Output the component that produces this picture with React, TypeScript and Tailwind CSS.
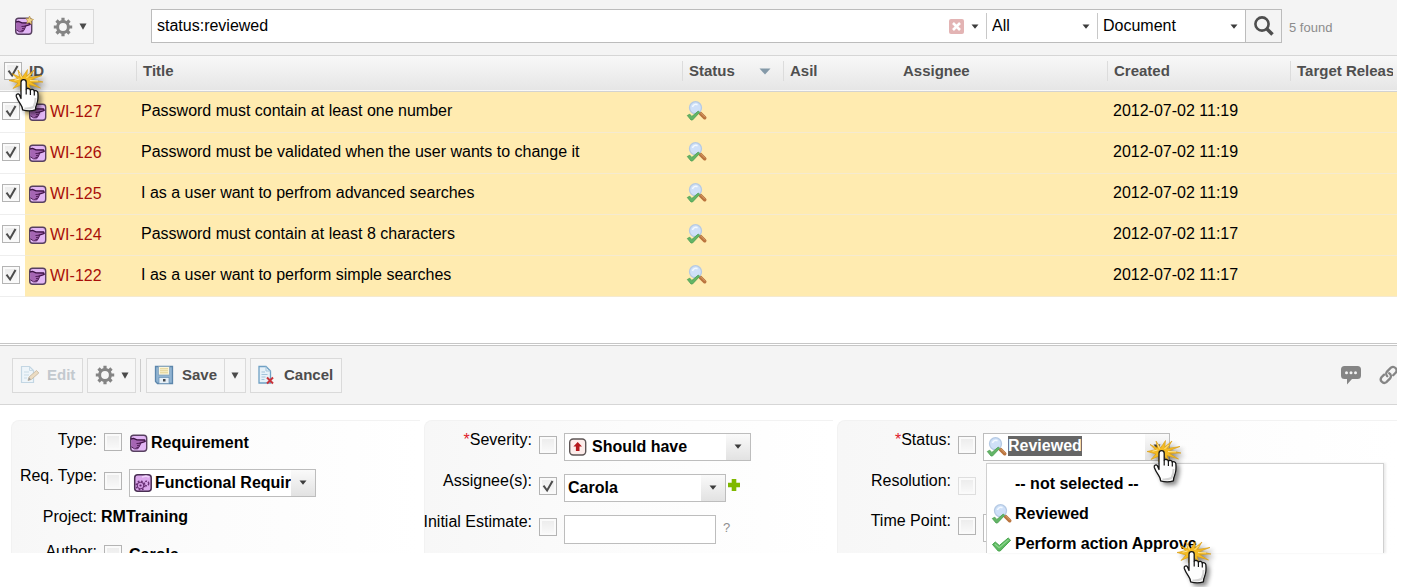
import React from "react";

type Item = { id: string; title: string; created: string };

const items: Item[] = [
  { id: "WI-127", title: "Password must contain at least one number", created: "2012-07-02 11:19" },
  { id: "WI-126", title: "Password must be validated when the user wants to change it", created: "2012-07-02 11:19" },
  { id: "WI-125", title: "I as a user want to perfrom advanced searches", created: "2012-07-02 11:19" },
  { id: "WI-124", title: "Password must contain at least 8 characters", created: "2012-07-02 11:17" },
  { id: "WI-122", title: "I as a user want to perform simple searches", created: "2012-07-02 11:17" },
];

/* ---------- icons ---------- */

function RequirementIcon({ star = false }: { star?: boolean }) {
  return (
    <svg width="20" height="20" viewBox="0 0 20 20" className="shrink-0" aria-hidden="true">
      <rect x="1.700" y="2.200" width="16" height="16" rx="3" fill="#e2b6f5" stroke="#574060" strokeWidth="1.400" />
      <path d="M2.300 6.300l2.200-.8L8 6.800l7.800.3.300 1.800-5.100 1.300-.3 2.600-1.300 2.700-3.400.3-3.700-2.300z" fill="#a565b3" />
      <path d="M2 6l2.500-.6L8 6.800l7.700.2.500 1.500-5.600 1.800" fill="none" stroke="#3c1244" strokeWidth="1.300" strokeLinejoin="round" />
      <path d="M7.500 10.500l4-.3-.4 2-3 .3M10.800 12.400l-.8 1.800-2.500.3M9.700 14.500l-1 1.300H5.500l-3.200-2" fill="none" stroke="#4d1c56" strokeWidth="1" strokeLinejoin="round" />
      {star && (
        <path d="M15.500 0l1.200 2.700L19.500 3.500l-2.300 1.700.3 3-2.300-1.700-2.500 1 .8-2.700L11.800 2.500l2.700.1z" fill="#efd48a" stroke="#b08a3c" strokeWidth=".6" />
      )}
    </svg>
  );
}

function FunctionalIcon() {
  return (
    <svg width="20" height="20" viewBox="0 0 20 20" className="shrink-0" aria-hidden="true">
      <rect x="1.700" y="1.700" width="16.500" height="16.500" rx="3" fill="#dba8ec" stroke="#4a3054" strokeWidth="1.500" />
      <circle cx="7.500" cy="12.500" r="3.200" fill="#cf98df" stroke="#6b3277" strokeWidth="1.100" />
      <circle cx="7.500" cy="12.500" r="4.300" fill="none" stroke="#6b3277" strokeWidth="1.500" strokeDasharray="1.700 1.680" />
      <circle cx="7.500" cy="12.500" r="1.100" fill="#5c2268" />
      <circle cx="13.500" cy="10.500" r="2.200" fill="none" stroke="#6b3277" strokeWidth="1.500" strokeDasharray="1.700 1" />
      <path d="M9 4l4-1 3 1" stroke="#f0d4fa" strokeWidth="1.400" fill="none" />
    </svg>
  );
}

function ReviewedIcon() {
  return (
    <svg width="22" height="22" viewBox="0 0 22 22" className="shrink-0" aria-hidden="true">
      <path d="M14.200 13.200l4.500 4.500" stroke="#b9733d" strokeWidth="3.600" strokeLinecap="round" />
      <path d="M14.500 12.800l4.500 4.500" stroke="#dba06c" strokeWidth="1" />
      <circle cx="9.500" cy="7.700" r="6" fill="#cfe0f8" stroke="#b5cae4" strokeWidth="1.300" />
      <path d="M6.500 7a3.500 3.500 0 0 1 5-2.300" stroke="#f3f9ff" strokeWidth="1.600" fill="none" />
      <path d="M1.300 15.500l2.500-1.300 2 2.300 6.500-5.500 1.400 1.400-7.200 7.600H5z" fill="#63b566" stroke="#4b9d52" strokeWidth=".8" />
    </svg>
  );
}

function ApproveIcon() {
  return (
    <svg width="22" height="22" viewBox="0 0 22 22" className="shrink-0" aria-hidden="true">
      <path d="M1.500 11.500L4.300 9l4 3.500L17.200 5l2.400 2.300L9.200 18H7.200z" fill="#5cb860" stroke="#4aa54f" strokeWidth="1" strokeLinejoin="round" />
      <path d="M3.800 11l4.300 3.800 9.400-8" stroke="#8ad68b" strokeWidth="1.200" fill="none" />
    </svg>
  );
}

function SeverityIcon() {
  return (
    <svg width="20" height="20" viewBox="0 0 20 20" className="shrink-0" aria-hidden="true">
      <rect x="1.700" y="2" width="16" height="16" rx="3.500" fill="#fdecea" stroke="#5d5555" strokeWidth="1.400" />
      <path d="M9.700 5l4.300 4.500h-2.500V14H7.900V9.500H5.400z" fill="#b5161b" />
    </svg>
  );
}

function GearIcon() {
  return (
    <svg width="20" height="20" viewBox="0 0 20 20" className="shrink-0" aria-hidden="true">
      <g stroke="#848484" strokeWidth="3.200">
        <path d="M10 .8v3.500M10 15.700v3.500M.8 10h3.500M15.700 10h3.500M3.500 3.500l2.500 2.500M14 14l2.500 2.500M3.500 16.500L6 14M14 6l2.500-2.500" />
        <circle cx="10" cy="10" r="5.400" fill="none" strokeWidth="3" />
      </g>
    </svg>
  );
}

function Triangle() {
  return (
    <svg width="8" height="7" viewBox="0 0 8 7" className="shrink-0" aria-hidden="true">
      <path d="M.5.500h7L4 6.700z" fill="#4a4a4a" />
    </svg>
  );
}

function SmallCaret() {
  return (
    <svg width="8" height="5" viewBox="0 0 8 5" className="shrink-0" aria-hidden="true">
      <path d="M.5.500h7L4 4.700z" fill="#3c3c3c" />
    </svg>
  );
}

function EditIcon() {
  return (
    <svg width="20" height="20" viewBox="0 0 20 20" className="shrink-0" aria-hidden="true">
      <path d="M1.500 1.500h8l4 4v12h-12z" fill="#eef5fa" stroke="#c3d6e3" strokeWidth="1.200" />
      <path d="M9.500 1.500v4h4M4 7h5M4 10h5M4 13h3" stroke="#c9dbe6" fill="none" />
      <path d="M8 15.500l1-3.500 7.500-6.500 2.300 2.500-7.500 6.500z" fill="#ecdcc2" stroke="#c8bba5" strokeWidth=".9" />
      <path d="M8 15.500l1-3.200 2 2.200z" fill="#9e9e9e" />
    </svg>
  );
}

function SaveIcon() {
  return (
    <svg width="20" height="20" viewBox="0 0 20 20" className="shrink-0" aria-hidden="true">
      <path d="M1.500 1.500h17v17h-15l-2-2z" fill="#8fb3d2" stroke="#5c86ab" strokeWidth="1.300" />
      <rect x="4.500" y="1.500" width="11" height="8.500" fill="#fbf6dc" stroke="#7d9dba" strokeWidth=".7" />
      <path d="M6 3.800h8M6 5.800h8M6 7.800h8" stroke="#e0cf8a" />
      <rect x="5" y="12.500" width="10" height="6" fill="#e6eff6" stroke="#6a92b5" strokeWidth=".7" />
      <rect x="9" y="14" width="2.500" height="2.500" fill="#44484c" />
    </svg>
  );
}

function CancelIcon() {
  return (
    <svg width="20" height="20" viewBox="0 0 20 20" className="shrink-0" aria-hidden="true">
      <path d="M3 1.500h7l4.500 4.500v12H3z" fill="#e6f1f8" stroke="#6fa0c4" strokeWidth="1.300" />
      <path d="M10 1.500V6h4.500M5.500 7H9M5.500 9.500h6M5.500 12h4M5.500 14.500h3" stroke="#a3c3da" fill="none" />
      <path d="M11 12.500l6 6M17 12.500l-6 6" stroke="#c9333a" strokeWidth="2" />
    </svg>
  );
}

function ClearIcon() {
  return (
    <svg width="15" height="15" viewBox="0 0 15 15" aria-hidden="true">
      <rect width="15" height="15" rx="2" fill="#e3b4b4" />
      <path d="M4 4l7 7M11 4l-7 7" stroke="#fff" strokeWidth="2.600" />
    </svg>
  );
}

function SearchIcon() {
  return (
    <svg width="22" height="22" viewBox="0 0 22 22" aria-hidden="true">
      <circle cx="9" cy="9" r="6.600" fill="none" stroke="#4e4e4e" strokeWidth="2.600" />
      <path d="M13.500 13.500l6 6" stroke="#4e4e4e" strokeWidth="3.600" />
    </svg>
  );
}

function CommentIcon() {
  return (
    <svg width="20" height="20" viewBox="0 0 20 20" aria-hidden="true">
      <path d="M3.500 1h13a3.500 3.500 0 0 1 3.500 3.500v6a3.500 3.500 0 0 1-3.500 3.500H11l-5 5.500V14H3.500A3.500 3.500 0 0 1 0 10.500v-6A3.500 3.500 0 0 1 3.500 1z" fill="#858585" />
      <circle cx="5.500" cy="7.700" r="1.500" fill="#f4f4f4" />
      <circle cx="10" cy="7.700" r="1.500" fill="#f4f4f4" />
      <circle cx="14.500" cy="7.700" r="1.500" fill="#f4f4f4" />
    </svg>
  );
}

function LinkIcon() {
  return (
    <svg width="20" height="20" viewBox="0 0 20 20" aria-hidden="true">
      <g fill="none" stroke="#858585" strokeWidth="2.300" strokeLinecap="round">
        <path d="M8.200 11.200a3.400 3.400 0 0 1 0-4.800l3.700-3.700a3.500 3.500 0 0 1 4.900 4.900l-2.600 2.600" />
        <path d="M10.200 8.200a3.400 3.400 0 0 1 .9 5.200l-3.700 3.700a3.500 3.500 0 0 1-4.900-4.900l2.600-2.600" />
      </g>
    </svg>
  );
}

function PlusIcon() {
  return (
    <svg width="14" height="14" viewBox="0 0 14 14" aria-hidden="true">
      <path d="M4.700 1h4.600v3.700H13v4.600H9.300V13H4.700V9.300H1V4.700h3.700z" fill="#7fb800" />
    </svg>
  );
}

function ClickHand() {
  return (
    <svg width="44" height="50" viewBox="0 0 44 50" className="drop-shadow-[3px_3px_2px_rgba(0,0,0,0.45)]" aria-hidden="true">
      <path
        d="M14.500 12L19.500 4.500 18.800 11 26 5l-4.500 7.500L34 10.500 23.500 14.500 35 17l-11.500.5 9 5.500-11.500-3.500 1.500 5-5-4.500-5 5.500.5-5.500-8 3.500 5-5.500L1 15.500l8.500-1.800L4 8.500l7.500 3.500L10 5z"
        fill="#f3bb24"
        stroke="#d99a0c"
        strokeWidth=".6"
      />
      <path d="M11.500 14l-5 1.200M13.500 12.500L11.500 8M18.500 13l4-4M22 15.500l8 .3" stroke="#ffe9a3" strokeWidth=".9" />
      <path
        d="M13 33.500V17.300a2.600 2.600 0 0 1 5.200 0v7.200c.6-1.500 3.700-1.400 4.200.6.900-1.200 3.500-.8 3.900 1 1-.8 3.400-.4 3.600 1.800.3 4 .2 7.600-1 10.600-1.100 2.700-1.400 4.200-1.500 6.300-3.800 1.300-8.800 1.200-12.800 0 0-3-1-4.200-2.600-6.500-1.600-2.200-2.800-4.400-3.700-6.800-.7-2.300 2-3.500 3.200-1.600z"
        fill="#fdfdfd"
        stroke="#141414"
        strokeWidth="1.300"
        strokeLinejoin="round"
      />
      <path d="M18.200 24.500v5M22.400 25v5M26.300 26v4.500" stroke="#141414" strokeWidth="1.200" />
      <path d="M27.500 33c.2 3-.5 6-2 9-3 1.500-6 1.800-9 1.500" stroke="#d4d4d4" strokeWidth="2" fill="none" />
    </svg>
  );
}

/* ---------- controls ---------- */

function Tick({ label, checked = false, disabled = false }: { label: string; checked?: boolean; disabled?: boolean }) {
  return (
    <span className="grid size-[18px] shrink-0">
      <input
        type="checkbox"
        aria-label={label}
        defaultChecked={checked}
        disabled={disabled}
        className="peer col-start-1 row-start-1 size-[18px] appearance-none border border-[#b4b4b4] bg-linear-to-b from-[#ebebeb] to-[#fafafa] shadow-[inset_0_0_0_2px_#fafafa] disabled:border-[#dedede]"
      />
      <svg viewBox="0 0 18 18" className="pointer-events-none invisible col-start-1 row-start-1 size-[18px] peer-checked:visible" aria-hidden="true">
        <path d="M4.500 8.700l3.600 4.800L13.500 4" fill="none" stroke="#4c4c4c" strokeWidth="2" />
      </svg>
    </span>
  );
}

function FilterSelect({ label, value, className }: { label: string; value: string; className: string }) {
  return (
    <div className={`grid items-center border-l border-[#c8c8c8] ${className}`}>
      <select aria-label={label} className="col-start-1 row-start-1 w-full appearance-none bg-transparent pl-[5px] text-base leading-6 text-black outline-none">
        <option>{value}</option>
      </select>
      <span className="pointer-events-none col-start-1 row-start-1 mr-[7px] justify-self-end">
        <SmallCaret />
      </span>
    </div>
  );
}

function CaretBox() {
  return (
    <span className="pointer-events-none flex w-6 shrink-0 items-center justify-center self-stretch bg-linear-to-b from-[#fafafa] to-[#e2e2e2]">
      <SmallCaret />
    </span>
  );
}

function Combo({ id, value, icon, width }: { id: string; value: string; icon?: React.ReactNode; width: string }) {
  return (
    <div className={`flex h-7 items-center border border-[#bdbdbd] bg-white pl-[3px] ${width}`}>
      {icon}
      <select id={id} className="h-6 min-w-0 flex-1 appearance-none bg-white pb-0.5 font-bold text-black outline-none">
        <option>{value}</option>
      </select>
      <CaretBox />
    </div>
  );
}

type FieldProps = {
  label: string;
  htmlFor?: string;
  required?: boolean;
  compact?: boolean;
  tick?: "off" | "on" | "disabled" | "none";
  height?: string;
  children?: React.ReactNode;
};

function Field({ label, htmlFor, required, compact, tick = "off", height = "h-[41px]", children }: FieldProps) {
  return (
    <div className={`flex items-start ${height}`}>
      <div className="flex w-28 shrink-0 justify-end">
        <label htmlFor={htmlFor} className="leading-5 whitespace-nowrap">
          {required && <span className="text-[#e0202a]">*</span>}
          {label}
        </label>
      </div>
      {tick !== "none" && (
        <span className={`mr-[7px] ml-[7px] flex ${compact ? "mt-[3px]" : "mt-[6px]"}`}>
          <Tick label={`Change ${label}`} checked={tick === "on"} disabled={tick === "disabled"} />
        </span>
      )}
      {children}
    </div>
  );
}

const button = "flex h-[35px] items-center border border-[#dadada] bg-[#f6f6f6] text-[15px] font-bold text-[#4d4d4d]";
const panel = "min-w-0 rounded-tl-lg border-l border-t border-[#f2f2f2] bg-linear-to-r from-[#f7f7f7] via-[#fcfcfc] to-white pt-[9px]";
const th = "h-[34px] overflow-hidden p-0 pb-1 text-left align-middle whitespace-nowrap";
const thInner = "flex h-5 items-center border-l border-[#dcdcdc] pl-1.5";

export default function App() {
  return (
    <div className="mr-[18px] bg-white pb-[34px] font-['Liberation_Sans',Arial,sans-serif] text-base text-black">
      <header className="flex h-14 items-start border-b border-[#d6d6d6] bg-[#f4f4f4] pt-[9px]">
        <button type="button" aria-label="New requirement" className="ml-[14px] mt-[7px]">
          <RequirementIcon star />
        </button>
        <button type="button" aria-label="Settings" className={`${button} ml-[11px] w-[49px] justify-center gap-1.5`}>
          <GearIcon />
          <Triangle />
        </button>
        <div className="ml-[57px] flex h-[34px] min-w-0 flex-1 items-stretch border border-[#bcbcbc] bg-white">
          <input type="text" aria-label="Search query" defaultValue="status:reviewed" className="min-w-0 flex-1 pl-[5px] outline-none" />
          <button type="button" aria-label="Clear" className="mr-[7px]">
            <ClearIcon />
          </button>
          <button type="button" aria-label="Recent queries" className="mr-[7px]">
            <SmallCaret />
          </button>
          <FilterSelect label="Scope" value="All" className="my-[3px] w-[111px]" />
          <FilterSelect label="Kind" value="Document" className="my-[3px] w-[148px]" />
          <button type="button" aria-label="Search" className="flex w-9 items-center justify-center border-l border-[#bcbcbc] bg-[#f4f4f4]">
            <SearchIcon />
          </button>
        </div>
        <span className="ml-[7px] mt-[9px] w-[108px] text-[13px] leading-5 text-[#8c8c8c]">5 found</span>
      </header>

      <div className="relative">
        <table className="w-full table-fixed border-collapse">
          <colgroup>
            <col className="w-[25px]" />
            <col className="w-[111px]" />
            <col />
            <col className="w-[101px]" />
            <col className="w-[113px]" />
            <col className="w-[211px]" />
            <col className="w-[183px]" />
            <col className="w-[107px]" />
          </colgroup>
          <thead>
            <tr className="h-[35px] border-b border-[#d2d2d2] bg-linear-to-b from-[#f8f8f8] to-[#e6e6e6] text-[15px] text-[#4f4f4f]">
              <th className={`${th} pl-1`}>
                <Tick label="Select all" checked />
              </th>
              <th className={`${th} pl-1`}>ID</th>
              <th className={th}><div className={thInner}>Title</div></th>
              <th className={th}>
                <div className={thInner}>
                  Status
                  <svg width="12" height="7" viewBox="0 0 12 7" className="ml-auto mr-3" aria-hidden="true">
                    <path d="M.5.500h11L6 6.500z" fill="#8499a8" />
                  </svg>
                </div>
              </th>
              <th className={th}><div className={thInner}>Asil</div></th>
              <th className={th}><div className="pl-[7px]">Assignee</div></th>
              <th className={th}><div className={thInner}>Created</div></th>
              <th className={`${th} pr-1`}><div className={`${thInner} overflow-hidden`}>Target Release</div></th>
            </tr>
          </thead>
          <tbody>
            {items.map((item) => (
              <tr key={item.id} className="h-[41px] border-b border-[#f5ead0] bg-[#ffebb0]">
                <td className="border-b border-[#eeeeee] bg-white p-0 pb-0.5 pl-0.5">
                  <Tick label={`Select ${item.id}`} checked />
                </td>
                <td className="p-0 pl-[3px]">
                  <div className="flex items-center gap-0.5">
                    <RequirementIcon />
                    <a href={`#${item.id}`} className="text-[#a80f0a]">{item.id}</a>
                  </div>
                </td>
                <td className="truncate p-0 pb-0.5 pl-[5px]">{item.title}</td>
                <td className="p-0 pb-0.5 pl-1"><ReviewedIcon /></td>
                <td />
                <td />
                <td className="p-0 pb-0.5 pl-1.5">{item.created}</td>
                <td />
              </tr>
            ))}
          </tbody>
        </table>
        <div className="pointer-events-none absolute left-2 top-[9px]">
          <ClickHand />
        </div>
      </div>

      <section className="mt-[46px] border-t border-[#c6c6c6] pt-px">
        <div className="flex items-center overflow-hidden border-b border-t border-b-[#d6d6d6] border-t-[#c6c6c6] bg-[#f4f4f4] pt-3 pb-[11px] pl-3">
          <button type="button" disabled className={`${button} w-[71px] gap-[7px] pl-[7px] text-[#c3c9ce]`}>
            <EditIcon />
            <span>Edit</span>
          </button>
          <button type="button" aria-label="Actions" className={`${button} ml-1 w-[49px] justify-center gap-1.5`}>
            <GearIcon />
            <Triangle />
          </button>
          <span className="ml-1 h-[33px] w-px bg-[#cccccc]" />
          <button type="button" className={`${button} ml-[5px] w-[79px] gap-2 pl-[7px]`}>
            <SaveIcon />
            <span>Save</span>
          </button>
          <button type="button" aria-label="Save options" className={`${button} w-[21px] justify-center border-l-0`}>
            <Triangle />
          </button>
          <button type="button" className={`${button} ml-1 w-[92px] gap-2 pl-[5px]`}>
            <CancelIcon />
            <span>Cancel</span>
          </button>
          <button type="button" aria-label="Comments" className="ml-auto">
            <CommentIcon />
          </button>
          <button type="button" aria-label="Link" className="-mr-0.5 ml-[18px]">
            <LinkIcon />
          </button>
        </div>

        <div className="relative">
          <form className="grid h-[148px] grid-cols-[409fr_409fr_560fr] gap-1 overflow-hidden pl-[11px] pt-[15px]">
            <div className={panel}>
              <div className="-ml-[27px]">
                <Field label="Type:" height="h-9" compact>
                  <div className="mt-[3px] flex items-center gap-0.5 font-bold">
                    <RequirementIcon />
                    <span className="leading-5">Requirement</span>
                  </div>
                </Field>
                <Field label="Req. Type:" htmlFor="req-type">
                  <div className="mt-[3px]">
                    <Combo id="req-type" value="Functional Requirement" icon={<span className="mr-0.5"><FunctionalIcon /></span>} width="w-[187px]" />
                  </div>
                </Field>
                <Field label="Project:" tick="none" height="h-[35px]">
                  <span className="ml-1 font-bold leading-5">RMTraining</span>
                </Field>
                <Field label="Author:" height="h-9" compact>
                  <span className="mt-[3px] font-bold leading-5">Carola</span>
                </Field>
              </div>
            </div>

            <div className={`${panel} mb-[5px]`}>
              <div className="-ml-[5px]">
                <Field label="Severity:" htmlFor="severity" required>
                  <div className="mt-[3px]">
                    <Combo id="severity" value="Should have" icon={<span className="mr-1"><SeverityIcon /></span>} width="w-[187px]" />
                  </div>
                </Field>
                <Field label="Assignee(s):" htmlFor="assignee" tick="on">
                  <div className="mt-[3px] flex gap-[1px]">
                    <Combo id="assignee" value="Carola" width="w-[162px]" />
                    <button type="button" aria-label="Add assignee" className="mt-1 self-start">
                      <PlusIcon />
                    </button>
                  </div>
                </Field>
                <Field label="Initial Estimate:" htmlFor="estimate">
                  <input id="estimate" type="text" className="mt-[3px] h-[29px] w-[152px] border border-[#bdbdbd] bg-white px-1" />
                  <a href="#estimate-help" className="ml-[7px] mt-[6px] text-[13px] leading-5 text-[#8f8f8f]">?</a>
                </Field>
              </div>
            </div>

            <div className={`${panel} mb-[5px]`}>
              <div className="ml-px">
                <Field label="Status:" htmlFor="status" required>
                  <button
                    id="status"
                    type="button"
                    role="combobox"
                    aria-expanded="true"
                    aria-controls="status-options"
                    className="mt-[3px] flex h-7 w-[187px] items-center border border-[#bdbdbd] bg-white pl-0.5 font-bold"
                  >
                    <ReviewedIcon />
                    <span className="mb-0.5 bg-[#666666] leading-5 text-white">Reviewed</span>
                    <span className="ml-auto flex self-stretch"><CaretBox /></span>
                  </button>
                </Field>
                <Field label="Resolution:" tick="disabled" height="h-10" />
                <Field label="Time Point:" htmlFor="time-point">
                  <div className="mt-[3px]">
                    <Combo id="time-point" value="" width="w-[187px]" />
                  </div>
                </Field>
              </div>
            </div>
          </form>

          <ul
            id="status-options"
            role="listbox"
            className="absolute right-[13px] top-[58px] h-[90px] w-[398px] overflow-hidden border border-b-0 border-[#d0d0d0] bg-white pt-[5px] font-bold shadow-[2px_0_2px_rgba(0,0,0,0.08)]"
          >
            <li role="option" className="flex h-[30px] items-center pl-7">-- not selected --</li>
            <li role="option" aria-selected="true" className="flex h-[30px] items-center gap-0.5 pl-1"><ReviewedIcon />Reviewed</li>
            <li role="option" className="flex h-[30px] items-center gap-0.5 pl-1"><ApproveIcon />Perform action Approve</li>
          </ul>
          <div className="pointer-events-none absolute right-[207px] top-[31px]">
            <ClickHand />
          </div>
          <div className="pointer-events-none absolute right-[177px] top-[132px]">
            <ClickHand />
          </div>
        </div>
      </section>
    </div>
  );
}
